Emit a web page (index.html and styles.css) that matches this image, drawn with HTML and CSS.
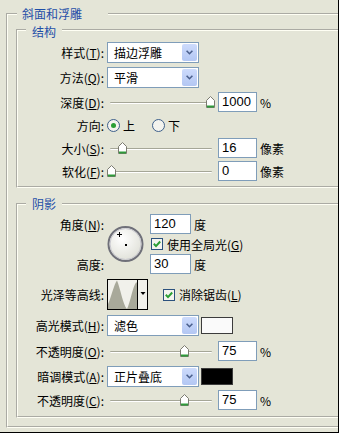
FILE: index.html
```html
<!DOCTYPE html>
<html lang="zh-CN">
<head>
    <meta charset="UTF-8">
    <title>斜面和浮雕</title>
    <link rel="stylesheet" href="styles.css">
</head>
<body>
<div class="dialog">
    <div class="group outer">
        <div class="title">斜面和浮雕</div>

        <div class="group struct">
            <div class="title">结构</div>

            <div class="row r-style">
                <span class="lbl">样式(<u>T</u>):</span>
                <div class="select"><span>描边浮雕</span><span class="arrow"><svg width="7" height="5" viewBox="0 0 7 5"><path d="M.6 .8l2.9 2.9 2.9-2.9" stroke="#4a5f8c" stroke-width="1.6" fill="none"/></svg></span></div>
            </div>

            <div class="row r-method">
                <span class="lbl">方法(<u>Q</u>):</span>
                <div class="select"><span>平滑</span><span class="arrow"><svg width="7" height="5" viewBox="0 0 7 5"><path d="M.6 .8l2.9 2.9 2.9-2.9" stroke="#4a5f8c" stroke-width="1.6" fill="none"/></svg></span></div>
            </div>

            <div class="row r-depth">
                <span class="lbl">深度(<u>D</u>):</span>
                <div class="slider"><span class="thumb" style="left: 99px"><svg width="9" height="12" viewBox="0 0 9 12"><path d="M.5 4.5L4.5 .5l4 4v7h-8z" fill="#fff" stroke="#7b7b70"/><path d="M1 9.5h7v2H1z" fill="#2f9a3a"/></svg></span></div>
                <div class="num">1000</div>
                <span class="unit">%</span>
            </div>

            <div class="row r-dir">
                <span class="lbl">方向:</span>
                <span class="radio"><svg width="13" height="13" viewBox="0 0 13 13"><circle cx="6.5" cy="6.5" r="6" fill="#f3f3ee" stroke="#3d5f8a"/><circle cx="6.5" cy="6.5" r="2.5" fill="#2a9e34"/></svg>上</span>
                <span class="radio"><svg width="13" height="13" viewBox="0 0 13 13"><circle cx="6.5" cy="6.5" r="6" fill="#f3f3ee" stroke="#3d5f8a"/></svg>下</span>
            </div>

            <div class="row r-size">
                <span class="lbl">大小(<u>S</u>):</span>
                <div class="slider"><span class="thumb" style="left: 11px"><svg width="9" height="12" viewBox="0 0 9 12"><path d="M.5 4.5L4.5 .5l4 4v7h-8z" fill="#fff" stroke="#7b7b70"/><path d="M1 9.5h7v2H1z" fill="#2f9a3a"/></svg></span></div>
                <div class="num">16</div>
                <span class="unit">像素</span>
            </div>

            <div class="row r-soft">
                <span class="lbl">软化(<u>F</u>):</span>
                <div class="slider"><span class="thumb" style="left: 0px"><svg width="9" height="12" viewBox="0 0 9 12"><path d="M.5 4.5L4.5 .5l4 4v7h-8z" fill="#fff" stroke="#7b7b70"/><path d="M1 9.5h7v2H1z" fill="#2f9a3a"/></svg></span></div>
                <div class="num">0</div>
                <span class="unit">像素</span>
            </div>
        </div>

        <div class="group shade">
            <div class="title">阴影</div>

            <div class="angle">
                <span class="lbl a-lbl">角度(<u>N</u>):</span>
                <span class="lbl h-lbl">高度:</span>
                <span class="dial"><svg width="37" height="38" viewBox="0 0 37 38">
                    <defs>
                        <radialGradient id="dialFill" cx="40%" cy="35%" r="70%">
                            <stop offset="0" stop-color="#ffffff"/>
                            <stop offset="1" stop-color="#dedfd6"/>
                        </radialGradient>
                    </defs>
                    <circle cx="18.5" cy="19" r="17" fill="url(#dialFill)" stroke="#6f7079" stroke-width="2"/>
                    <circle cx="18.5" cy="19" r="15.5" fill="none" stroke="#c9c9cf" stroke-width="1"/>
                    <path d="M12.5 7v5M10 9.5h5" stroke="#000" stroke-width="1"/>
                    <rect x="18" y="19" width="2" height="2" fill="#000"/>
                </svg></span>
                <div class="a-val"><div class="num wide">120</div><span class="unit">度</span></div>
                <div class="a-check"><span class="check"><svg width="12" height="12" viewBox="0 0 12 12"><rect x=".5" y=".5" width="11" height="11" fill="#f4f4ef" stroke="#2b517d"/><path d="M2.8 5.8l2.2 2.3 4.2-4.6" stroke="#2a9e34" stroke-width="2" fill="none"/></svg></span>使用全局光(<u>G</u>)</div>
                <div class="h-val"><div class="num wide">30</div><span class="unit">度</span></div>
            </div>

            <div class="row r-contour">
                <span class="lbl">光泽等高线:</span>
                <span class="contour"><svg width="41" height="31" viewBox="0 0 41 31">
                    <rect x=".5" y=".5" width="40" height="30" fill="#f1f1eb" stroke="#000"/>
                    <path d="M1 30V25C4 19 7 5 10 1.5 13 8 16 26 20 30 23 24 26 7 29 3.5L30 3.5V30Z" fill="#a8a99a"/>
                    <path d="M30.5 1v29" stroke="#000"/>
                    <path d="M33.5 13h5l-2.5 3z" fill="#000"/>
                </svg></span>
                <span class="check aa"><svg width="12" height="12" viewBox="0 0 12 12"><rect x=".5" y=".5" width="11" height="11" fill="#f4f4ef" stroke="#2b517d"/><path d="M2.8 5.8l2.2 2.3 4.2-4.6" stroke="#2a9e34" stroke-width="2" fill="none"/></svg></span>消除锯齿(<u>L</u>)
            </div>

            <div class="row r-hl">
                <span class="lbl">高光模式(<u>H</u>):</span>
                <div class="select"><span>滤色</span><span class="arrow"><svg width="7" height="5" viewBox="0 0 7 5"><path d="M.6 .8l2.9 2.9 2.9-2.9" stroke="#4a5f8c" stroke-width="1.6" fill="none"/></svg></span></div>
                <span class="swatch light"></span>
            </div>

            <div class="row r-op1">
                <span class="lbl">不透明度(<u>O</u>):</span>
                <div class="slider"><span class="thumb" style="left: 73px"><svg width="9" height="12" viewBox="0 0 9 12"><path d="M.5 4.5L4.5 .5l4 4v7h-8z" fill="#fff" stroke="#7b7b70"/><path d="M1 9.5h7v2H1z" fill="#2f9a3a"/></svg></span></div>
                <div class="num">75</div>
                <span class="unit">%</span>
            </div>

            <div class="row r-sh">
                <span class="lbl">暗调模式(<u>A</u>):</span>
                <div class="select"><span>正片叠底</span><span class="arrow"><svg width="7" height="5" viewBox="0 0 7 5"><path d="M.6 .8l2.9 2.9 2.9-2.9" stroke="#4a5f8c" stroke-width="1.6" fill="none"/></svg></span></div>
                <span class="swatch dark"></span>
            </div>

            <div class="row r-op2">
                <span class="lbl">不透明度(<u>C</u>):</span>
                <div class="slider"><span class="thumb" style="left: 73px"><svg width="9" height="12" viewBox="0 0 9 12"><path d="M.5 4.5L4.5 .5l4 4v7h-8z" fill="#fff" stroke="#7b7b70"/><path d="M1 9.5h7v2H1z" fill="#2f9a3a"/></svg></span></div>
                <div class="num">75</div>
                <span class="unit">%</span>
            </div>
        </div>
    </div>
</div>
</body>
</html>
```

FILE: styles.css
```css
html, body {
    margin: 0;
    background: #fff;
}
body {
    font-family: "Noto Sans CJK SC", "Liberation Sans", sans-serif;
    font-size: 12px;
    color: #000;
}
.dialog {
    width: 338px;
    height: 432px;
    border-right: 1px solid #000;
    border-bottom: 1px solid #000;
    background: #e4e5d7;
    overflow: hidden;
}

/* group boxes: etched frame, title sits on the top line */
.group {
    border: 2px groove #fffff4;
}
.title {
    width: max-content;
    margin: -9px 0 0 8px;
    padding: 0 6px;
    line-height: 16px;
    color: #1f4fa8;
    background: #e4e5d7;
}
.outer {
    width: 380px;
    margin: 13px 0 0 6px;
    padding: 0 0 8px 8px;
}
.outer > .title {
    margin-left: 1px;
    padding: 0 26px 0 5px;
}
.struct {
    margin-top: 7px;
    padding: 2px 0 4px;
}
.shade {
    margin-top: 15px;
    padding: 0 0 3px;
}

/* rows */
.row {
    display: flex;
    align-items: center;
}
.lbl {
    width: 86px;
    margin-right: 3px;
    text-align: right;
    white-space: nowrap;
}
.r-style, .r-method { height: 25px; }
.r-depth { height: 24px; }
.r-dir { height: 22px; }
.r-size { height: 24px; }
.r-soft { height: 22px; }
.r-contour { height: 37px; }
.r-hl { height: 24px; }
.r-op1 { height: 28px; }
.r-sh { height: 22px; }
.r-op2 { height: 26px; }

/* controls */
.select {
    width: 92px;
    height: 21px;
    box-sizing: border-box;
    border: 1px solid #7f9db9;
    background: #fff;
    display: flex;
    align-items: center;
    justify-content: space-between;
    padding-left: 6px;
}
.select .arrow {
    width: 15px;
    height: 17px;
    margin-right: 1px;
    border-radius: 2px;
    background: linear-gradient(#cddbfc, #b3c7f3);
    display: flex;
    align-items: center;
    justify-content: center;
}
.num {
    width: 39px;
    height: 20px;
    box-sizing: border-box;
    border: 1px solid #7f9db9;
    background: #fff;
    padding-left: 3px;
    font: 13px/18px "Liberation Sans", sans-serif;
}
.num.wide {
    width: 41px;
}
.unit {
    margin-left: 3px;
}
.slider {
    position: relative;
    width: 111px;
    height: 14px;
}
.slider::before {
    content: "";
    position: absolute;
    left: 3px;
    right: 6px;
    top: 7px;
    height: 1px;
    background: #a5a697;
    border-bottom: 1px solid #fff;
    border-radius: 1px;
}
.thumb {
    position: absolute;
    top: 1px;
    width: 9px;
    height: 12px;
    line-height: 0;
}
.radio {
    display: flex;
    align-items: center;
    gap: 3px;
    margin-right: 17px;
}
.check {
    display: inline-flex;
    margin-right: 4px;
}
.check.aa {
    margin-left: 15px;
}
.contour {
    display: flex;
}
.swatch {
    width: 32px;
    height: 17px;
    box-sizing: border-box;
    margin-left: 2px;
    border: 1px solid #3c3c3c;
}
.swatch.light { background: #fafafa; }
.swatch.dark { background: #000; }

/* angle / altitude block */
.angle {
    display: grid;
    grid-template-columns: 89px 43px auto;
    grid-template-rows: 24px 16px 24px;
    align-items: center;
}
.a-lbl { grid-column: 1; grid-row: 1; }
.h-lbl { grid-column: 1; grid-row: 3; }
.dial {
    grid-column: 2;
    grid-row: 1 / 4;
    align-self: start;
    margin-top: 13px;
    line-height: 0;
}
.a-val, .h-val {
    display: flex;
    align-items: center;
}
.a-val { grid-column: 3; grid-row: 1; }
.a-check {
    grid-column: 3;
    grid-row: 2;
    display: flex;
    align-items: center;
    margin-left: 1px;
}
.h-val { grid-column: 3; grid-row: 3; }
```
